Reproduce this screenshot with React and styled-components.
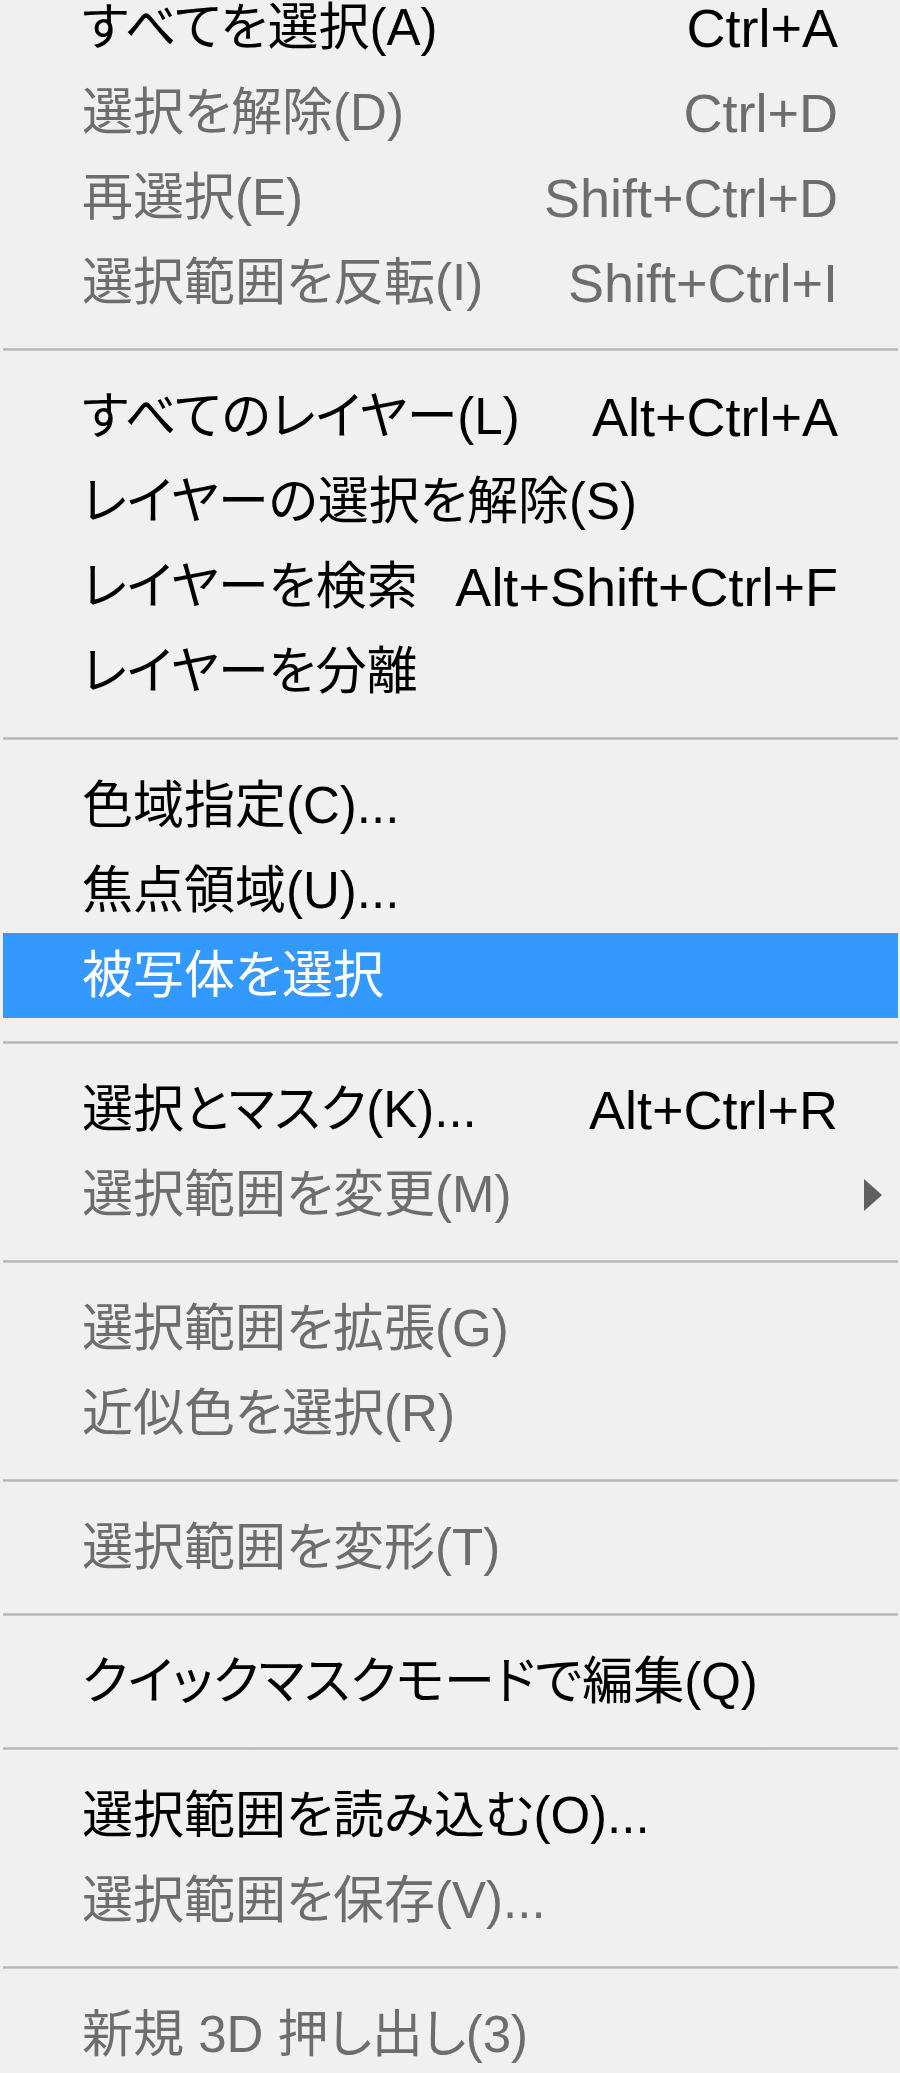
import React from "react";
import styled, { createGlobalStyle } from "styled-components";

const GlobalStyle = createGlobalStyle`
  html, body {
    margin: 0;
    padding: 0;
    background: #f0f0f0;
    overflow: hidden;
  }
  body {
    font-family: "Liberation Sans", "Noto Sans CJK JP", sans-serif;
  }
`;

const Viewport = styled.div`
  width: 900px;
  height: 2073px;
  overflow: hidden;
  background: #f0f0f0;
`;

const Menu = styled.ul`
  list-style: none;
  margin: -15px 0 0 0;
  padding: 0 2px 0 3px;
  display: flex;
  flex-direction: column;
  background: #f0f0f0;
`;

const Item = styled.li`
  height: 85px;
  display: flex;
  align-items: center;
  padding: 0 ${(p) => (p.$arrow ? "15px" : "60px")} 0 79px;
  font-family: "Liberation Sans", "Noto Sans CJK JP", sans-serif;
  font-feature-settings: "palt";
  line-height: 1;
  white-space: nowrap;
  color: ${(p) => (p.$active ? "#ffffff" : p.$disabled ? "#6d6d6d" : "#000000")};
  background: ${(p) => (p.$active ? "#3399ff" : "transparent")};
`;

const Label = styled.span`
  flex: 1;
  font-size: 51px;
`;

const Shortcut = styled.span`
  margin-left: 30px;
  font-size: 54px;
`;

const Separator = styled.li`
  height: 49px;
  display: flex;
  align-items: center;
  &::after {
    content: "";
    display: block;
    width: 100%;
    height: 3px;
    background: linear-gradient(#cfcfcf, #b5b5b5 50%, #d4d4d4);
  }
`;

const Arrow = styled.svg`
  width: 20px;
  height: 34px;
  flex: none;
`;

const groups = [
  [
    { label: "すべてを選択(A)", sc: "Ctrl+A" },
    { label: "選択を解除(D)", sc: "Ctrl+D", disabled: true },
    { label: "再選択(E)", sc: "Shift+Ctrl+D", disabled: true },
    { label: "選択範囲を反転(I)", sc: "Shift+Ctrl+I", disabled: true },
  ],
  [
    { label: "すべてのレイヤー(L)", sc: "Alt+Ctrl+A" },
    { label: "レイヤーの選択を解除(S)" },
    { label: "レイヤーを検索", sc: "Alt+Shift+Ctrl+F" },
    { label: "レイヤーを分離" },
  ],
  [
    { label: "色域指定(C)..." },
    { label: "焦点領域(U)..." },
    { label: "被写体を選択", active: true },
  ],
  [
    { label: "選択とマスク(K)...", sc: "Alt+Ctrl+R" },
    { label: "選択範囲を変更(M)", disabled: true, arrow: true },
  ],
  [
    { label: "選択範囲を拡張(G)", disabled: true },
    { label: "近似色を選択(R)", disabled: true },
  ],
  [{ label: "選択範囲を変形(T)", disabled: true }],
  [{ label: "クイックマスクモードで編集(Q)" }],
  [
    { label: "選択範囲を読み込む(O)..." },
    { label: "選択範囲を保存(V)...", disabled: true },
  ],
  [{ label: "新規 3D 押し出し(3)", disabled: true }],
];

export default function App() {
  return (
    <Viewport>
      <GlobalStyle />
      <Menu>
        {groups.map((g, gi) => (
          <React.Fragment key={gi}>
            {gi > 0 && <Separator />}
            {g.map((it) => (
              <Item
                key={it.label}
                $disabled={it.disabled}
                $active={it.active}
                $arrow={it.arrow}
              >
                <Label>{it.label}</Label>
                {it.sc && <Shortcut>{it.sc}</Shortcut>}
                {it.arrow && (
                  <Arrow viewBox="0 0 20 34">
                    <path d="M1 1 L19 17 L1 33 Z" fill="#5f5f5f" />
                  </Arrow>
                )}
              </Item>
            ))}
          </React.Fragment>
        ))}
      </Menu>
    </Viewport>
  );
}
